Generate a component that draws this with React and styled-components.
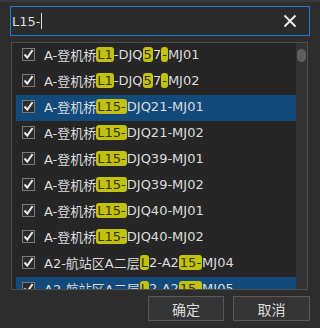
import React, { useState } from 'react';
import styled, { createGlobalStyle } from 'styled-components';

const GlobalStyle = createGlobalStyle`
  html, body {
    margin: 0;
    padding: 0;
    background: #2d2d2d;
  }
`;

const Panel = styled.div`
  width: 320px;
  height: 328px;
  box-sizing: border-box;
  background: #2d2d2d;
  border-top: 2px solid #3a3a3a;
  padding: 4px 10px 0 10px;
  display: flex;
  flex-direction: column;
  font-family: "DejaVu Sans", "Noto Sans CJK SC", sans-serif;
  color: #dcdcdc;
`;

const SearchBox = styled.div`
  height: 30px;
  box-sizing: border-box;
  border: 1px solid #1f7bd3;
  background: #2b2b2b;
  display: flex;
  align-items: center;
  padding: 0 12px 0 1px;
`;

const SearchText = styled.div`
  flex: 1;
  font-size: 13px;
  color: #dcdcdc;
  display: flex;
  align-items: center;
`;

const Caret = styled.span`
  display: inline-block;
  width: 1px;
  height: 16px;
  background: #dcdcdc;
  margin-left: 1px;
`;

const ClearButton = styled.button`
  border: none;
  background: none;
  padding: 0;
  width: 14px;
  height: 14px;
  display: flex;
  cursor: pointer;
`;

const ListBox = styled.div`
  margin: 6px 2px 0 1px;
  height: 248px;
  box-sizing: border-box;
  border: 1px solid #4e4e4e;
  background: #262626;
  display: flex;
  overflow: hidden;
`;

const ListBody = styled.div`
  flex: 1;
  padding-left: 4px;
  overflow: hidden;
`;

const Row = styled.div`
  height: 26px;
  box-sizing: border-box;
  display: flex;
  align-items: center;
  padding: 0 0 3px 6px;
  background: ${p => (p.selected ? '#124a7b' : 'transparent')};
  font-size: 13px;
  white-space: nowrap;
`;

const Check = styled.span`
  width: 13px;
  height: 13px;
  box-sizing: border-box;
  border: 1px solid #7a7a7a;
  background: #2a2a2a;
  display: flex;
  align-items: center;
  justify-content: center;
  margin-right: 9px;
  flex-shrink: 0;
`;

const Mark = styled.span`
  display: inline-block;
  background: #c2c20c;
  color: #33330a;
  border-radius: 3px;
  line-height: 15px;
  padding: 0 1px;
`;

const ScrollTrack = styled.div`
  width: 11px;
  background: #333333;
  display: flex;
  justify-content: center;
  padding-top: 6px;
`;

const ScrollThumb = styled.div`
  width: 9px;
  height: 13px;
  border-radius: 5px;
  background: #5f5f5f;
`;

const Footer = styled.div`
  margin-top: 6px;
  display: flex;
  justify-content: flex-end;
  gap: 9px;
`;

const Button = styled.button`
  width: ${p => p.w}px;
  height: 25px;
  box-sizing: border-box;
  background: #353535;
  border: 1px solid #595959;
  color: #dcdcdc;
  font-family: "Noto Sans CJK SC", sans-serif;
  font-size: 14px;
  padding: 0;
`;

// each item: list of [text, highlighted]
const items = [
  [['A-登机桥', 0], ['L1', 1], ['-DJQ', 0], ['5', 1], ['7', 0], ['-', 1], ['MJ01', 0]],
  [['A-登机桥', 0], ['L1', 1], ['-DJQ', 0], ['5', 1], ['7', 0], ['-', 1], ['MJ02', 0]],
  [['A-登机桥', 0], ['L15-', 1], ['DJQ21-MJ01', 0]],
  [['A-登机桥', 0], ['L15-', 1], ['DJQ21-MJ02', 0]],
  [['A-登机桥', 0], ['L15-', 1], ['DJQ39-MJ01', 0]],
  [['A-登机桥', 0], ['L15-', 1], ['DJQ39-MJ02', 0]],
  [['A-登机桥', 0], ['L15-', 1], ['DJQ40-MJ01', 0]],
  [['A-登机桥', 0], ['L15-', 1], ['DJQ40-MJ02', 0]],
  [['A2-航站区A二层', 0], ['L', 1], ['2-A2', 0], ['15-', 1], ['MJ04', 0]],
  [['A2-航站区A二层', 0], ['L', 1], ['2-A2', 0], ['15-', 1], ['MJ05', 0]],
];

const CheckIcon = () => (
  <svg width="11" height="11" viewBox="0 0 11 11">
    <path d="M1.5 5.5 L4.3 8.6 L9.6 1.2" fill="none" stroke="#e8e8e8" strokeWidth="2" />
  </svg>
);

const App = () => {
  const [query] = useState('L15-');
  const selected = [2, 9];

  return (
    <Panel>
      <GlobalStyle />
      <SearchBox>
        <SearchText>
          {query}
          <Caret />
        </SearchText>
        <ClearButton>
          <svg width="14" height="14" viewBox="0 0 14 14">
            <path d="M1.5 1.5 L12.5 12.5 M12.5 1.5 L1.5 12.5" stroke="#f0f0f0" strokeWidth="1.8" />
          </svg>
        </ClearButton>
      </SearchBox>

      <ListBox>
        <ListBody>
          {items.map((parts, i) => (
            <Row key={i} selected={selected.includes(i)}>
              <Check>
                <CheckIcon />
              </Check>
              {parts.map(([t, hl], j) => (hl ? <Mark key={j}>{t}</Mark> : <span key={j}>{t}</span>))}
            </Row>
          ))}
        </ListBody>
        <ScrollTrack>
          <ScrollThumb />
        </ScrollTrack>
      </ListBox>

      <Footer>
        <Button w={76}>确定</Button>
        <Button w={77}>取消</Button>
      </Footer>
    </Panel>
  );
};

export default App;
